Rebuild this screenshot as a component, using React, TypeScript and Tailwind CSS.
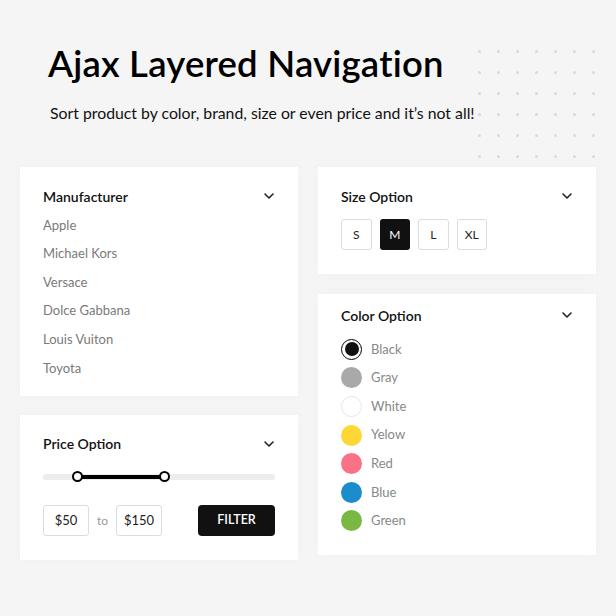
const MANUFACTURERS = ['Apple', 'Michael Kors', 'Versace', 'Dolce Gabbana', 'Louis Vuiton', 'Toyota'];

const SIZES = ['S', 'M', 'L', 'XL'];

const COLORS = [
  { label: 'Black', swatch: 'bg-[#111111]', selected: true },
  { label: 'Gray', swatch: 'bg-[#a9a9a9]' },
  { label: 'White', swatch: 'bg-white border border-[#e6e6e6]' },
  { label: 'Yelow', swatch: 'bg-[#fdd735]' },
  { label: 'Red', swatch: 'bg-[#fb7186]' },
  { label: 'Blue', swatch: 'bg-[#1a8dca]' },
  { label: 'Green', swatch: 'bg-[#79b943]' },
];

function Chevron() {
  return (
    <svg width="10" height="6" viewBox="0 0 10 6" fill="none" className="mr-[1px]">
      <path d="M1 1l4 4 4-4" stroke="#222" strokeWidth="1.6" strokeLinecap="round" strokeLinejoin="round" />
    </svg>
  );
}

function PanelHeader({ title }: { title: string }) {
  return (
    <div className="flex items-center justify-between h-[20px]">
      <h3 className="text-[14px] font-semibold text-[#111]">{title}</h3>
      <Chevron />
    </div>
  );
}

export default function App() {
  return (
    <div className="relative w-[616px] h-[616px] overflow-hidden bg-[#f5f5f5] font-['Lato',sans-serif]">
      {/* Dot pattern */}
      <div className="absolute left-[478px] top-[50px] grid grid-cols-7 gap-x-[16px] gap-y-[18px]">
        {Array.from({ length: 42 }).map((_, i) => (
          <span key={i} className="block w-[3px] h-[3px] rounded-full bg-[#dadada]" />
        ))}
      </div>

      {/* Header */}
      <div className="relative pl-[48px] pt-[40px]">
        <h1 className="text-[36.5px] leading-[46px] font-semibold text-black tracking-[0.2px]">Ajax Layered Navigation</h1>
        <p className="mt-[17px] ml-[2px] text-[15.8px] leading-[20px] text-[#111]">
          Sort product by color, brand, size or even price and it’s not all!
        </p>
      </div>

      {/* Panels */}
      <div className="relative mt-[44px] px-[20px] grid grid-cols-2 gap-x-[20px] items-start">
        <div className="flex flex-col gap-[19px]">
          {/* Manufacturer */}
          <div className="bg-white shadow-[0_0_12px_rgba(0,0,0,0.025)] px-[23px] pt-[19px] pb-[13px]">
            <PanelHeader title="Manufacturer" />
            <ul className="mt-[5px]">
              {MANUFACTURERS.map((m) => (
                <li key={m} className="h-[28.6px] flex items-center text-[13px] text-[#7a7a7a]">
                  {m}
                </li>
              ))}
            </ul>
          </div>

          {/* Price */}
          <div className="bg-white shadow-[0_0_12px_rgba(0,0,0,0.025)] px-[23px] pt-[19px] pb-[23.5px]">
            <PanelHeader title="Price Option" />
            <div className="relative mt-[18px] h-[10px] flex items-center">
              <div className="w-full h-[6px] rounded-full bg-[#ececec]" />
              <div className="absolute left-[34px] w-[87px] top-[3px] h-[4px] bg-black" />
              <span className="absolute left-[28.5px] top-[-0.5px] w-[11px] h-[11px] rounded-full bg-white border-2 border-black" />
              <span className="absolute left-[115.5px] top-[-0.5px] w-[11px] h-[11px] rounded-full bg-white border-2 border-black" />
            </div>
            <div className="mt-[23.5px] flex items-center">
              <div className="w-[46px] h-[31px] flex items-center justify-center border border-[#dcdcdc] rounded-[3px] text-[13px] text-[#222]">
                $50
              </div>
              <span className="mx-[8px] text-[12px] text-[#999]">to</span>
              <div className="w-[46px] h-[31px] flex items-center justify-center border border-[#dcdcdc] rounded-[3px] text-[13px] text-[#222]">
                $150
              </div>
              <button className="ml-auto w-[77px] h-[31px] rounded-[4px] bg-[#111] text-white text-[12.5px] font-semibold">
                FILTER
              </button>
            </div>
          </div>
        </div>

        <div className="flex flex-col gap-[20px]">
          {/* Size */}
          <div className="bg-white shadow-[0_0_12px_rgba(0,0,0,0.025)] px-[23px] pt-[19px] pb-[24px]">
            <PanelHeader title="Size Option" />
            <div className="mt-[13px] flex gap-[8px]">
              {SIZES.map((s) => (
                <div
                  key={s}
                  className={
                    s === 'M'
                      ? 'w-[30.5px] h-[31px] flex items-center justify-center rounded-[3px] bg-[#111] text-white text-[12px]'
                      : 'w-[30.5px] h-[31px] flex items-center justify-center rounded-[3px] border border-[#dcdcdc] text-[#222] text-[12px]'
                  }
                >
                  {s}
                </div>
              ))}
            </div>
          </div>

          {/* Color */}
          <div className="bg-white shadow-[0_0_12px_rgba(0,0,0,0.025)] px-[23px] pt-[11px] pb-[20px]">
            <PanelHeader title="Color Option" />
            <ul className="mt-[10px]">
              {COLORS.map((c) => (
                <li key={c.label} className="h-[28.6px] flex items-center gap-[9px]">
                  {c.selected ? (
                    <span className="w-[21px] h-[21px] rounded-full border-[1.5px] border-black flex items-center justify-center">
                      <span className="w-[14px] h-[14px] rounded-full bg-[#111]" />
                    </span>
                  ) : (
                    <span className={`w-[21px] h-[21px] rounded-full ${c.swatch}`} />
                  )}
                  <span className="text-[13px] text-[#888]">{c.label}</span>
                </li>
              ))}
            </ul>
          </div>
        </div>
      </div>
    </div>
  );
}
